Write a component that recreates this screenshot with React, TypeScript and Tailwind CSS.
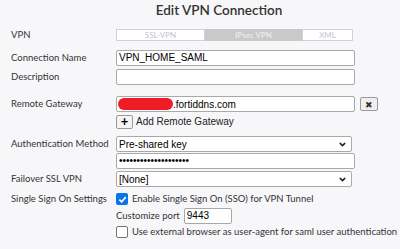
import { ChevronDown } from 'lucide-react'

const Label = ({ children }: { children: React.ReactNode }) => (
  <div className="w-[105px] shrink-0 whitespace-nowrap text-[9.5px] text-[#333]">{children}</div>
)

function TextBox({ value, className = '' }: { value?: string; className?: string }) {
  return (
    <div
      className={`h-[16px] w-[239px] rounded-[2px] border border-[#a9a9a9] bg-white pl-[2px] text-[10px] leading-[14px] text-black font-['Liberation_Sans',Arial,sans-serif] ${className}`}
    >
      {value}
    </div>
  )
}

function Select({ value }: { value: string }) {
  return (
    <div className="flex h-[16px] w-[236px] items-center justify-between rounded-[2px] border border-[#a9a9a9] bg-white pl-[2px] pr-[4px] text-[10px] text-black font-['Liberation_Sans',Arial,sans-serif]">
      <span>{value}</span>
      <ChevronDown size={9} strokeWidth={4} className="text-[#222]" />
    </div>
  )
}

export default function App() {
  return (
    <div className="h-[249px] w-[400px] overflow-hidden bg-[#f7f7f9] font-['Lato','Open_Sans',sans-serif]">
      <div className="pl-[38px] pt-[2px] text-center text-[13.5px] font-semibold leading-[17px] text-[#333]">
        Edit VPN Connection
      </div>

      {/* VPN type */}
      <div className="mt-[10px] flex h-[12px] items-center pl-[11px]">
        <Label>VPN</Label>
        <div className="flex h-[12px] w-[237px] text-[8px] leading-[10px] text-[#c4c4c4]">
          <div className="flex w-[89px] items-center justify-center border border-[#c8d4e0] bg-white">SSL-VPN</div>
          <div className="flex w-[97px] items-center justify-center bg-[#c9c9c9] font-semibold text-[#ececec]">IPsec VPN</div>
          <div className="flex w-[51px] items-center justify-center border border-[#c8d4e0] bg-white">XML</div>
        </div>
      </div>

      <div className="mt-[9px] flex items-center pl-[11px]">
        <Label>Connection Name</Label>
        <TextBox value="VPN_HOME_SAML" />
      </div>

      <div className="mt-[3px] flex items-center pl-[11px]">
        <Label>Description</Label>
        <TextBox />
      </div>

      <div className="mt-[11px] flex items-center pl-[11px]">
        <Label>Remote Gateway</Label>
        <div className="flex h-[16px] w-[239px] items-center rounded-[2px] border border-[#a9a9a9] bg-white pl-[1px] text-[10px] text-black font-['Liberation_Sans',Arial,sans-serif]">
          <span className="h-[12px] w-[55px] rounded-[6px] bg-[#ee1c24]" />
          <span>.fortiddns.com</span>
        </div>
        <div className="ml-[5px] flex h-[14px] w-[18px] items-center justify-center rounded-[2px] border border-[#9a9a9a] bg-[#efefef] text-[9px] leading-none text-[#333]">
          ✖
        </div>
      </div>

      <div className="mt-[2px] flex items-center pl-[116px]">
        <div className="flex h-[14px] w-[17px] items-center justify-center rounded-[2px] border border-[#9a9a9a] bg-[#f4f4f4] text-[13px] font-bold leading-none text-black">
          +
        </div>
        <span className="ml-[3px] text-[10px] text-[#222] font-['Liberation_Sans',Arial,sans-serif]">Add Remote Gateway</span>
      </div>

      <div className="mt-[7px] flex items-center pl-[11px]">
        <Label>Authentication Method</Label>
        <Select value="Pre-shared key" />
      </div>

      <div className="mt-[1px] flex items-center pl-[116px]">
        <TextBox value="••••••••••••••••••••" />
      </div>

      <div className="mt-[2px] flex items-center pl-[11px]">
        <Label>Failover SSL VPN</Label>
        <Select value="[None]" />
      </div>

      <div className="mt-[5px] flex h-[14px] items-center pl-[11px]">
        <Label>Single Sign On Settings</Label>
        <div className="flex h-[12px] w-[12px] shrink-0 items-center justify-center rounded-[2px] bg-[#0a75e8]">
          <svg width="9" height="9" viewBox="0 0 10 10">
            <path d="M1.5 5.2 L4 7.6 L8.6 2.4" fill="none" stroke="white" strokeWidth="1.8" />
          </svg>
        </div>
        <span className="ml-[4px] whitespace-nowrap text-[9.5px] text-[#333]">Enable Single Sign On (SSO) for VPN Tunnel</span>
      </div>

      <div className="mt-[2px] flex items-center pl-[116px]">
        <span className="whitespace-nowrap text-[9.5px] text-[#333]">Customize port</span>
        <div className="ml-[4px] h-[16px] w-[48px] rounded-[2px] border border-[#a9a9a9] bg-white pl-[2px] text-[10px] leading-[14px] text-black font-['Liberation_Sans',Arial,sans-serif]">
          9443
        </div>
      </div>

      <div className="mt-[1px] flex h-[14px] items-center pl-[116px]">
        <div className="h-[12px] w-[12px] shrink-0 rounded-[2px] border border-[#767676] bg-white" />
        <span className="ml-[4px] whitespace-nowrap text-[9.5px] text-[#333]">Use external browser as user-agent for saml user authentication</span>
      </div>
    </div>
  )
}
